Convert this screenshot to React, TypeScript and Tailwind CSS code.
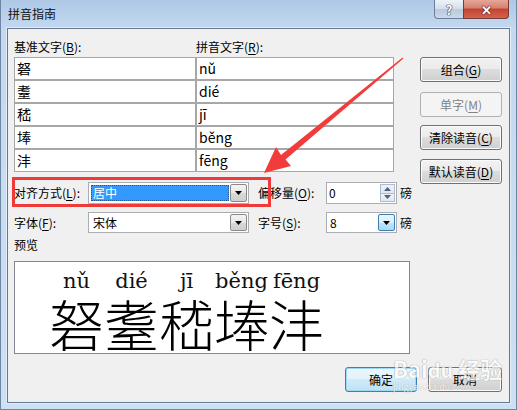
import React from 'react'

const ROWS = [
  { base: '砮', py: 'nǔ' },
  { base: '耋', py: 'dié' },
  { base: '嵇', py: 'jī' },
  { base: '埲', py: 'běng' },
  { base: '沣', py: 'fēng' },
]

const BTN =
  'flex items-center justify-center rounded-[3px] border text-[12px] border-[#707070] bg-[linear-gradient(#f2f2f2_0%,#ebebeb_49%,#dddddd_50%,#cfcfcf_100%)] shadow-[inset_0_0_0_1px_#fbfbfb] text-black'

function Key({ k }: { k: string }) {
  return <span className="underline underline-offset-2 decoration-1">{k}</span>
}

function DropTri({ color = '#000' }: { color?: string }) {
  return (
    <svg width="7" height="4" viewBox="0 0 7 4">
      <polygon points="0,0 7,0 3.5,4" fill={color} />
    </svg>
  )
}

export default function App() {
  return (
    <div className="relative w-[517px] h-[410px] overflow-hidden border-x border-b border-[#6f86a3] bg-[linear-gradient(180deg,#aec8e6_0%,#c4d9f0_7%,#cde0f4_100%)] font-['Noto_Sans_CJK_SC','Noto_Sans',sans-serif] text-[12px] text-black">
      {/* Title bar */}
      <div className="flex h-[28px] items-start justify-between pl-[7px] pr-[7px]">
        <span className="mt-[5px] text-[12px] leading-[17px] text-[#101010]">拼音指南</span>
        <div className="flex">
          <div className="flex h-[19px] w-[29px] items-center justify-center rounded-bl-[4px] border border-t-0 border-r-0 border-[#6b7f99] bg-[linear-gradient(#eef3f9_0%,#d3deea_50%,#b9cadd_51%,#cad9ea_100%)] text-[13px] font-bold leading-none text-white [text-shadow:0_0_1px_#333,0_0_1px_#333,0_0_1px_#333]">
            ?
          </div>
          <div className="flex h-[19px] w-[46px] items-center justify-center rounded-br-[4px] border border-t-0 border-[#7a3a34] bg-[linear-gradient(#e6a798_0%,#d6806f_45%,#c2432f_50%,#d16450_100%)] text-[13px] font-bold leading-none text-white [text-shadow:0_0_1px_#3a1410,0_0_1px_#3a1410,0_0_1px_#3a1410]">
            ✕
          </div>
        </div>
      </div>

      {/* Client area */}
      <div className="mx-[6px] h-[375px] border border-[#66788f] bg-[#f0f0f0] shadow-[0_0_0_1px_#e2edf9]">
        <div className="flex flex-col pl-[6px] pr-[7px]">
          <div className="flex">
            {/* Left column */}
            <div className="flex w-[400px] flex-col pt-[9px]">
              <div className="grid h-[17px] grid-cols-[182px_198px] items-center leading-[17px]">
                <span>基准文字(<Key k="B" />):</span>
                <span>拼音文字(<Key k="R" />):</span>
              </div>
              <div className="mt-[2px] grid w-[380px] grid-cols-[180px_196px] gap-[2px] border border-[#a7a7a7] bg-[#a7a7a7]">
                {ROWS.map(r => (
                  <React.Fragment key={r.base}>
                    <div className="h-[21px] bg-white pl-[2px] text-[14px] leading-[21px]">{r.base}</div>
                    <div className="h-[21px] bg-white pl-[2px] text-[14px] leading-[21px]">{r.py}</div>
                  </React.Fragment>
                ))}
              </div>

              {/* 对齐方式 / 偏移量 */}
              <div className="mt-[10px] flex h-[22px] items-center">
                <span className="w-[74px]">对齐方式(<Key k="L" />):</span>
                <div className="flex h-[22px] w-[161px] border border-[#abadb3] bg-white p-[1px]">
                  <div className="my-[1px] ml-[1px] mr-[1px] flex flex-1 items-center bg-[#3399ff] pl-[2px] text-white outline-1 outline-dotted outline-offset-[-1px] outline-[#1a5aa0]">
                    居中
                  </div>
                  <div className="flex w-[17px] items-center justify-center rounded-[2px] border border-[#8a8a8a] bg-[linear-gradient(#f3f3f3_0%,#e8e8e8_50%,#d8d8d8_51%,#cfcfcf_100%)]">
                    <DropTri />
                  </div>
                </div>
                <span className="ml-[9px] w-[68px]">偏移量(<Key k="O" />):</span>
                <div className="flex h-[22px] w-[71px] border border-[#abadb3] bg-white">
                  <span className="flex-1 pl-[2px] leading-[20px]">0</span>
                  <div className="flex w-[17px] flex-col p-[1px]">
                    <div className="flex flex-1 items-center justify-center border border-[#b0bccb] bg-[linear-gradient(#f0f4f9,#dfe7f1)]">
                      <svg width="7" height="4" viewBox="0 0 7 4"><polygon points="0,4 7,4 3.5,0" fill="#4d6185" /></svg>
                    </div>
                    <div className="flex flex-1 items-center justify-center border border-t-0 border-[#b0bccb] bg-[linear-gradient(#f0f4f9,#dfe7f1)]">
                      <DropTri color="#4d6185" />
                    </div>
                  </div>
                </div>
                <span className="ml-[3px]">磅</span>
              </div>

              {/* 字体 / 字号 */}
              <div className="mt-[8px] flex h-[21px] items-center">
                <span className="w-[74px]">字体(<Key k="F" />):</span>
                <div className="flex h-[21px] w-[161px] border border-[#abadb3] bg-white p-[1px]">
                  <div className="flex flex-1 items-center pl-[3px]">宋体</div>
                  <div className="flex w-[17px] items-center justify-center rounded-[2px] border border-[#8a8a8a] bg-[linear-gradient(#f3f3f3_0%,#e8e8e8_50%,#d8d8d8_51%,#cfcfcf_100%)]">
                    <DropTri />
                  </div>
                </div>
                <span className="ml-[9px] w-[68px]">字号(<Key k="S" />):</span>
                <div className="flex h-[21px] w-[71px] border border-[#abadb3] bg-white p-[1px]">
                  <div className="flex flex-1 items-center pl-[2px]">8</div>
                  <div className="flex w-[17px] items-center justify-center rounded-[2px] border border-[#3c7fb1] bg-[linear-gradient(#eaf6fd_0%,#d9f0fc_50%,#bee6fd_51%,#a7d9f5_100%)]">
                    <DropTri />
                  </div>
                </div>
                <span className="ml-[3px]">磅</span>
              </div>

              <span className="mt-[4px] h-[16px] leading-[16px]">预览</span>

              {/* Preview */}
              <div className="mt-[8px] h-[93px] w-[396px] border border-[#828790] bg-white pl-[34px] pt-[8px]">
                <div className="flex">
                  {ROWS.map(r => (
                    <div key={r.base} className="flex w-[55px] flex-col items-center">
                      <span className="h-[22px] whitespace-nowrap font-['DejaVu_Serif',serif] text-[21px] leading-[22px] text-[#111]">
                        {r.py}
                      </span>
                      <span className="mt-[4px] h-[52px] font-['Noto_Sans_CJK_SC',sans-serif] text-[55px] leading-[52px] font-light">
                        {r.base}
                      </span>
                    </div>
                  ))}
                </div>
              </div>
            </div>

            {/* Right column */}
            <div className="ml-[6px] flex w-[82px] flex-col pt-[28px]">
              <div className={`${BTN} h-[25px]`}>组合(<Key k="G" />)</div>
              <div className="mt-[10px] flex h-[25px] items-center justify-center rounded-[3px] border border-[#adb2b5] bg-[#f4f4f4] text-[12px] text-[#838383]">
                单字(<Key k="M" />)
              </div>
              <div className={`${BTN} mt-[8px] h-[25px]`}>清除读音(<Key k="C" />)</div>
              <div className={`${BTN} mt-[9px] h-[25px]`}>默认读音(<Key k="D" />)</div>
            </div>
          </div>

          {/* Bottom buttons */}
          <div className="mt-[13px] flex justify-end gap-[11px]">
            <div className="flex h-[25px] w-[72px] items-center justify-center rounded-[3px] border border-[#3c7fb1] bg-[linear-gradient(#eaf6fd_0%,#e2f2fb_49%,#cfeaf8_50%,#bde2f5_100%)] shadow-[inset_0_0_0_1px_#9ed8f5] text-[12px]">
              确定
            </div>
            <div className={`${BTN} h-[25px] w-[74px]`}>取消</div>
          </div>
        </div>
      </div>

      {/* Baidu watermark */}
      <div className="pointer-events-none absolute left-[392px] top-[356px] flex flex-col items-start opacity-70">
        <span className="text-[22px] font-bold leading-[24px] text-white [text-shadow:0_0_1px_#8a8a8a,0_0_1px_#8a8a8a]">
          Bai<span className="text-[20px]">du</span> 经验
        </span>
        <span className="text-[9px] leading-[10px] text-white [text-shadow:0_0_1px_#8a8a8a]">jingyan.baidu.com</span>
      </div>

      {/* Red annotation */}
      <div className="pointer-events-none absolute left-[11px] top-[177px] h-[30px] w-[259px] border-[3px] border-[#f03a3a]" />
      <svg className="pointer-events-none absolute left-0 top-0" width="517" height="410" viewBox="0 0 517 410">
        <polygon
          points="263,173 290,166 284.5,159.5 402.4,58.4 401.6,57.6 280,155 275,147"
          fill="#f23c3c"
        />
      </svg>
    </div>
  )
}
